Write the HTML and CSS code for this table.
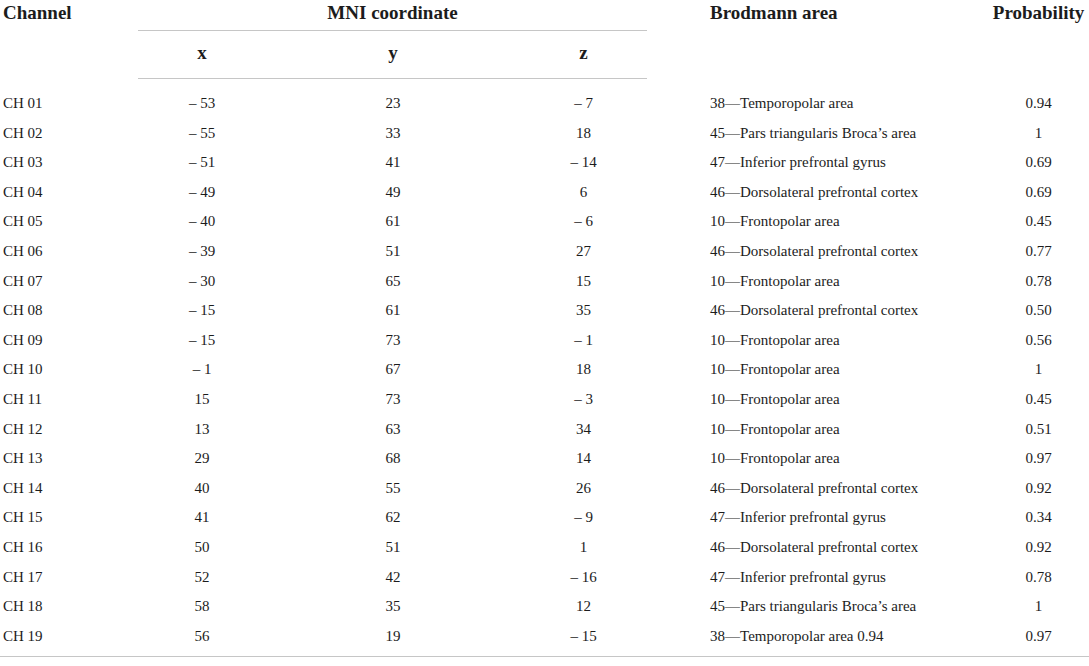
FILE: index.html
```html
<!DOCTYPE html>
<html lang="en">
<head>
    <meta charset="UTF-8">
    <meta name="viewport" content="width=device-width, initial-scale=1.0">
    <title>fNIRS Channel Locations</title>
    <link rel="stylesheet" href="styles.css">
</head>
<body>

<table class="channels">
    <colgroup>
        <col class="col-channel">
        <col class="col-x">
        <col class="col-y">
        <col class="col-z">
        <col class="col-area">
        <col class="col-prob">
    </colgroup>
    <thead>
        <tr class="head-top">
            <th rowspan="2" class="left">Channel</th>
            <th colspan="3" class="group">MNI coordinate</th>
            <th rowspan="2" class="area">Brodmann area</th>
            <th rowspan="2">Probability</th>
        </tr>
        <tr class="head-sub">
            <th>x</th>
            <th>y</th>
            <th>z</th>
        </tr>
    </thead>
    <tbody>
        <tr><td class="left">CH 01</td><td>– 53</td><td>23</td><td>– 7</td><td class="area">38—Temporopolar area</td><td>0.94</td></tr>
        <tr><td class="left">CH 02</td><td>– 55</td><td>33</td><td>18</td><td class="area">45—Pars triangularis Broca’s area</td><td>1</td></tr>
        <tr><td class="left">CH 03</td><td>– 51</td><td>41</td><td>– 14</td><td class="area">47—Inferior prefrontal gyrus</td><td>0.69</td></tr>
        <tr><td class="left">CH 04</td><td>– 49</td><td>49</td><td>6</td><td class="area">46—Dorsolateral prefrontal cortex</td><td>0.69</td></tr>
        <tr><td class="left">CH 05</td><td>– 40</td><td>61</td><td>– 6</td><td class="area">10—Frontopolar area</td><td>0.45</td></tr>
        <tr><td class="left">CH 06</td><td>– 39</td><td>51</td><td>27</td><td class="area">46—Dorsolateral prefrontal cortex</td><td>0.77</td></tr>
        <tr><td class="left">CH 07</td><td>– 30</td><td>65</td><td>15</td><td class="area">10—Frontopolar area</td><td>0.78</td></tr>
        <tr><td class="left">CH 08</td><td>– 15</td><td>61</td><td>35</td><td class="area">46—Dorsolateral prefrontal cortex</td><td>0.50</td></tr>
        <tr><td class="left">CH 09</td><td>– 15</td><td>73</td><td>– 1</td><td class="area">10—Frontopolar area</td><td>0.56</td></tr>
        <tr><td class="left">CH 10</td><td>– 1</td><td>67</td><td>18</td><td class="area">10—Frontopolar area</td><td>1</td></tr>
        <tr><td class="left">CH 11</td><td>15</td><td>73</td><td>– 3</td><td class="area">10—Frontopolar area</td><td>0.45</td></tr>
        <tr><td class="left">CH 12</td><td>13</td><td>63</td><td>34</td><td class="area">10—Frontopolar area</td><td>0.51</td></tr>
        <tr><td class="left">CH 13</td><td>29</td><td>68</td><td>14</td><td class="area">10—Frontopolar area</td><td>0.97</td></tr>
        <tr><td class="left">CH 14</td><td>40</td><td>55</td><td>26</td><td class="area">46—Dorsolateral prefrontal cortex</td><td>0.92</td></tr>
        <tr><td class="left">CH 15</td><td>41</td><td>62</td><td>– 9</td><td class="area">47—Inferior prefrontal gyrus</td><td>0.34</td></tr>
        <tr><td class="left">CH 16</td><td>50</td><td>51</td><td>1</td><td class="area">46—Dorsolateral prefrontal cortex</td><td>0.92</td></tr>
        <tr><td class="left">CH 17</td><td>52</td><td>42</td><td>– 16</td><td class="area">47—Inferior prefrontal gyrus</td><td>0.78</td></tr>
        <tr><td class="left">CH 18</td><td>58</td><td>35</td><td>12</td><td class="area">45—Pars triangularis Broca’s area</td><td>1</td></tr>
        <tr><td class="left">CH 19</td><td>56</td><td>19</td><td>– 15</td><td class="area">38—Temporopolar area 0.94</td><td>0.97</td></tr>
    </tbody>
</table>

</body>
</html>
```

FILE: styles.css
```css
body {
    margin: 0;
    background: #fff;
    color: #1c1c1c;
    font-family: "Liberation Serif", "Times New Roman", serif;
}
.channels {
    width: 1089px;
    table-layout: fixed;
    border-collapse: collapse;
}
.col-channel { width: 138px; }
.col-x { width: 128px; }
.col-y { width: 254px; }
.col-z { width: 127px; }
.col-area { width: 341px; }
.col-prob { width: 101px; }

.channels th {
    font-size: 19px;
    font-weight: bold;
    text-align: center;
    padding: 0;
    vertical-align: top;
}
.head-top th {
    line-height: 22px;
    padding: 2px 0 6px;
}
.head-top th.group {
    border-bottom: 1px solid #c6c6c6;
}
.head-sub th {
    line-height: 22px;
    padding: 11px 0 14px;
    border-bottom: 1px solid #c6c6c6;
}
.channels td {
    font-size: 15px;
    line-height: 29.6px;
    padding: 0;
    text-align: center;
    white-space: nowrap;
}
.channels tbody tr:first-child td {
    padding-top: 10px;
}
.channels tbody tr:last-child td {
    padding-bottom: 5px;
    border-bottom: 1px solid #c6c6c6;
}
.channels .left {
    text-align: left;
    padding-left: 3px;
}
.channels .area {
    text-align: left;
    padding-left: 63px;
}
.channels th.area {
    padding-left: 63px;
}
```
